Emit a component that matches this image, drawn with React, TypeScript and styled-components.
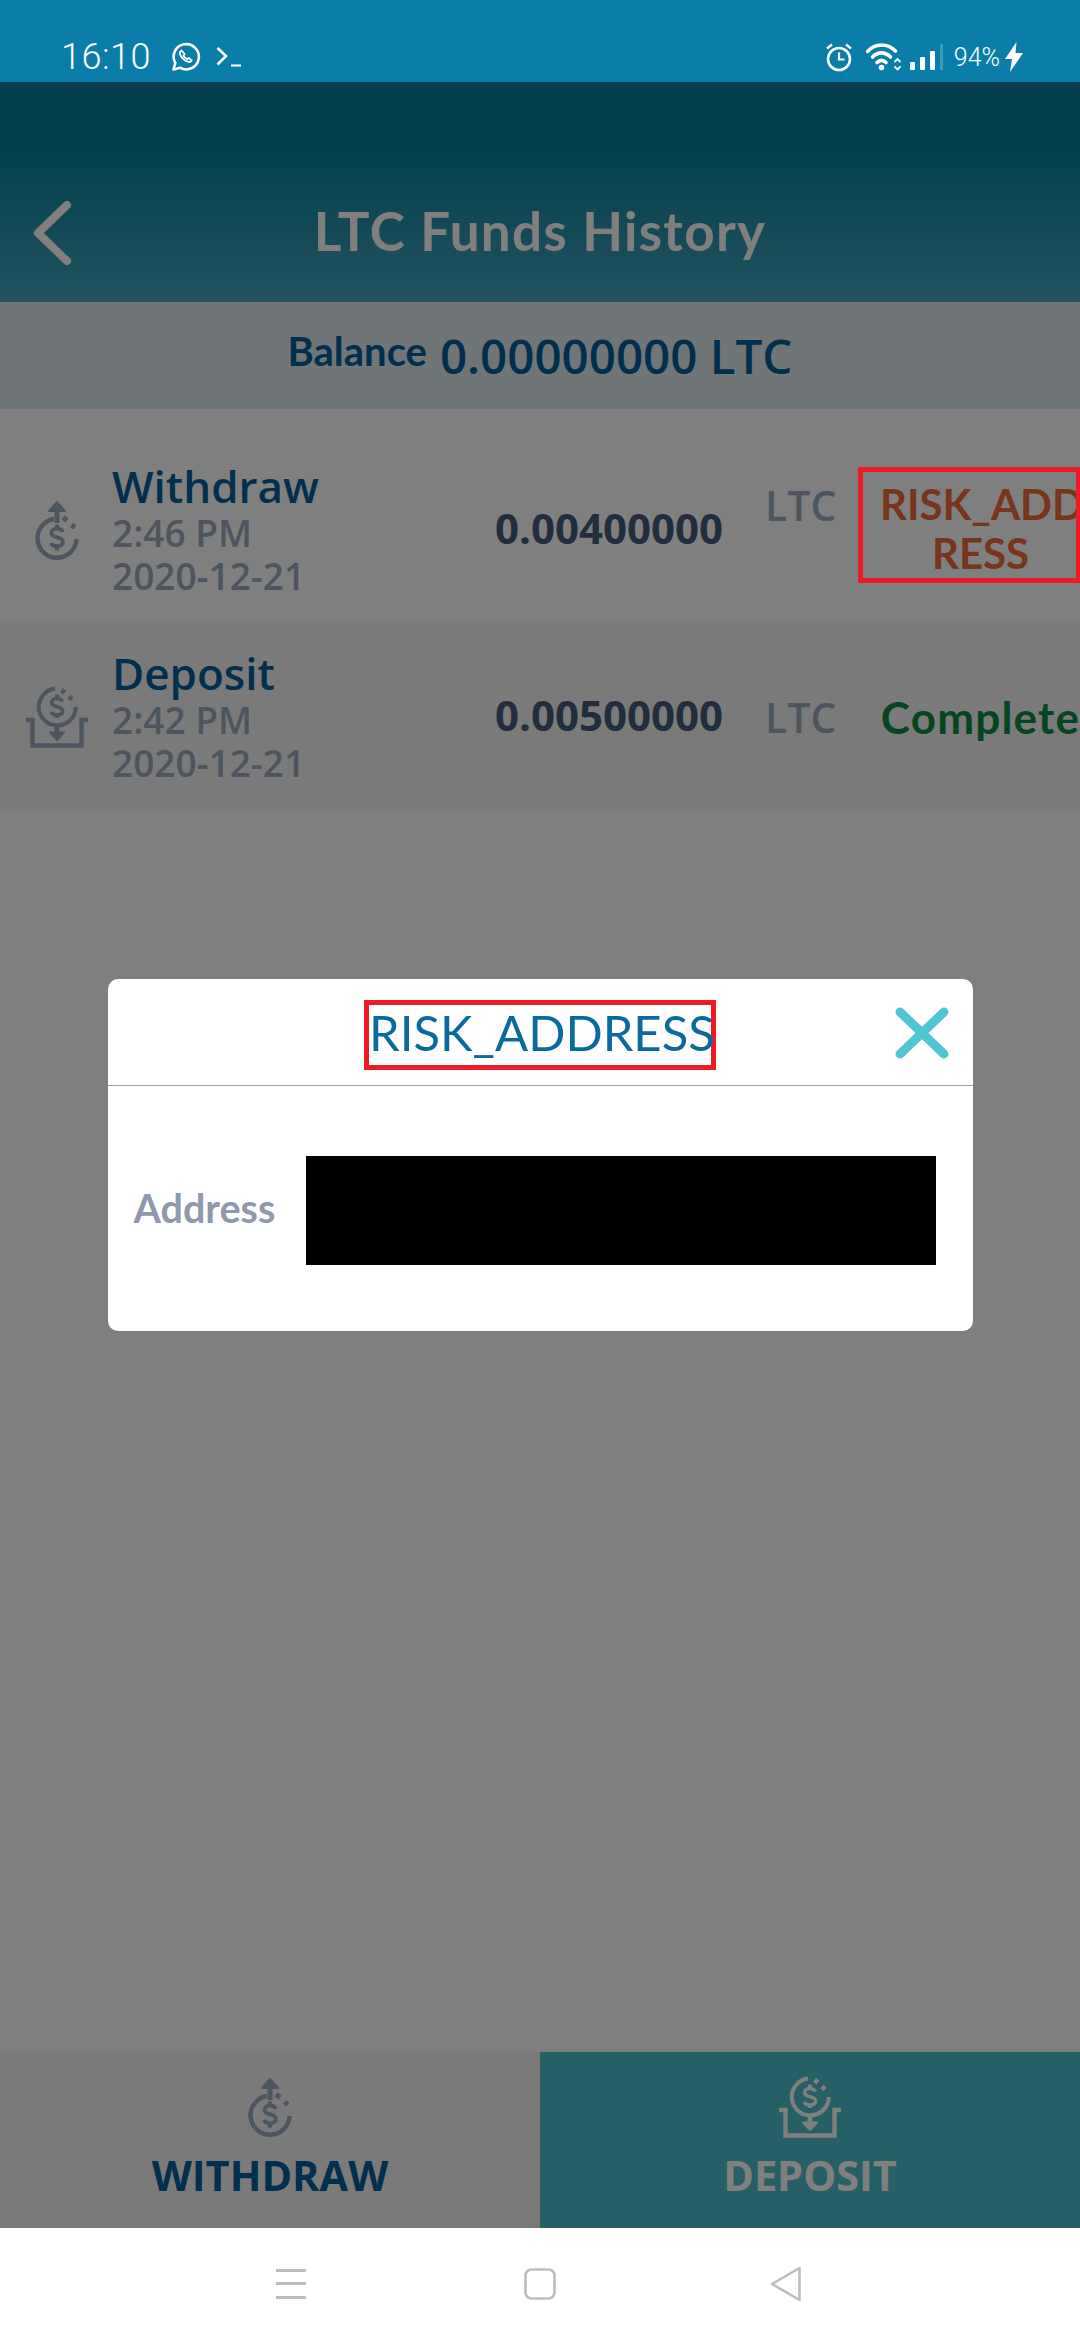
import React from "react";
import styled, { createGlobalStyle } from "styled-components";

const GlobalStyle = createGlobalStyle`
  html, body {
    margin: 0;
    padding: 0;
    background: #fff;
  }
  * {
    box-sizing: border-box;
  }
`;

const SANS = `"Open Sans", "Liberation Sans", sans-serif`;
const ROUND = `Lato, "Noto Sans", sans-serif`;

const WithdrawIcon = ({ color }: { color: string }) => (
  <svg width="60" height="62" viewBox="0 0 60 62" fill="none" stroke={color} strokeWidth="4.4">
    <path d="M30 24V8" strokeWidth="5" />
    <path d="M22 12 30 3l8 9z" fill={color} strokeWidth="2" strokeLinejoin="round" />
    <path d="M27 20A19.500 19.500 0 1 0 49.500 40" />
    <path d="M36 18.500l4 3M44.500 26l3.500 2.500" strokeWidth="5" />
    <path d="M36 33c-1-2.300-3.200-3.300-6-3.300-3.200 0-5.600 1.600-5.600 4.200 0 6 11.600 3 11.600 9 0 2.700-2.600 4.300-6 4.300-2.900 0-5.200-1-6.200-3.200" strokeWidth="3.800" />
    <path d="M30 25.500v3.500M30 47.500v4" strokeWidth="4.200" />
  </svg>
);

const DepositIcon = ({ color }: { color: string }) => (
  <svg width="62" height="62" viewBox="0 0 62 62" fill="none" stroke={color} strokeWidth="4">
    <path d="M29 2.500A18.500 18.500 0 1 0 49.800 21" />
    <path d="M35.500 4l3.500 2.700M43 10.500l3 3" strokeWidth="4.800" />
    <path d="M36.500 15.500c-1-2.100-3-3-5.500-3-3 0-5.300 1.500-5.300 4 0 5.600 11 2.800 11 8.500 0 2.500-2.500 4-5.700 4-2.700 0-4.900-1-5.800-3" strokeWidth="3.600" />
    <path d="M31 8.500v3M31 29v3" />
    <path d="M31 40v6" strokeWidth="4.800" />
    <path d="M24 46.500h14L31 54z" fill={color} strokeWidth="2" strokeLinejoin="round" />
    <path d="M1 34h5.500v25.500h49V34H61" strokeWidth="4.400" strokeLinecap="round" />
  </svg>
);

const WhatsappIcon = () => (
  <svg width="30" height="30" viewBox="0 0 30 30" fill="none" stroke="#fff" strokeWidth="2.600">
    <path d="M2.500 27.500l1.800-6.500a12.600 12.600 0 1 1 4.700 4.700z" strokeLinejoin="round" />
    <path d="M10.500 8.500c-1.500.8-2 2.400-1.400 4 1.300 3.300 3.900 5.900 7.400 7.200 1.700.6 3.300 0 4.200-1.500l-3-2.200-1.500 1.300c-1.700-.8-3-2.100-3.800-3.800l1.300-1.500z" strokeWidth="1.800" strokeLinejoin="round" />
  </svg>
);

const TerminalIcon = () => (
  <svg width="26" height="22" viewBox="0 0 26 22" fill="none" stroke="#fff" strokeWidth="2.600">
    <path d="M1.500 2 10 10 1.500 18.500" />
    <path d="M15 19.500h10" strokeWidth="2" />
  </svg>
);

const AlarmIcon = () => (
  <svg width="28" height="30" viewBox="0 0 28 30" fill="none" stroke="#fff" strokeWidth="2.600">
    <circle cx="14" cy="17" r="11" />
    <path d="M14 10.500v7h5.500" strokeWidth="2.200" />
    <path d="M2 6.500 7 2.500M26 6.500l-5-4" strokeWidth="2.400" />
  </svg>
);

const WifiIcon = () => (
  <svg width="36" height="30" viewBox="0 0 36 30" fill="none" stroke="#fff" strokeWidth="3.600" strokeLinecap="round">
    <path d="M1.500 9.500C9.500 1 21 1 29.500 9" />
    <path d="M6.500 15c5.500-5.500 12.500-5.500 18 0" />
    <path d="M11 20.500c3-3 6-3 9 0" />
    <circle cx="15.500" cy="25.500" r="2.800" fill="#fff" stroke="none" />
    <path d="M29 19.500l2.500-2.500 2.500 2.500M29 25l2.500 2.500L34 25" strokeWidth="1.800" />
  </svg>
);

const SignalIcon = () => (
  <svg width="34" height="28" viewBox="0 0 34 28" fill="#fff">
    <rect x="0" y="19" width="5" height="8" rx="1" />
    <rect x="10" y="14" width="5" height="13" rx="1" />
    <rect x="20" y="8" width="5" height="19" rx="1" />
    <rect x="30" y="1" width="3" height="26" fill="#3f9dc0" />
  </svg>
);

const BoltIcon = () => (
  <svg width="18" height="30" viewBox="0 0 18 30" fill="#fff">
    <path d="M11.500 0 0 17h7L5 30 18 11h-7.500z" />
  </svg>
);

const BackIcon = () => (
  <svg width="40" height="64" viewBox="0 0 40 64" fill="none" stroke="#fff" strokeWidth="8" strokeLinecap="round" strokeLinejoin="round">
    <path d="M34 4 5 32l29 28" />
  </svg>
);

const CloseIcon = () => (
  <svg width="54" height="52" viewBox="0 0 54 52" fill="none" stroke="#50c6d4" strokeWidth="9" strokeLinecap="round">
    <path d="M5 5l44 42M49 5 5 47" />
  </svg>
);

const MenuIcon = () => (
  <svg width="30" height="30" viewBox="0 0 30 30" fill="#bdbdbd">
    <rect y="0" width="30" height="3" />
    <rect y="13" width="30" height="3" />
    <rect y="27" width="30" height="3" />
  </svg>
);

const HomeIcon = () => (
  <svg width="32" height="32" viewBox="0 0 32 32" fill="none" stroke="#bdbdbd" strokeWidth="2.600">
    <rect x="1.500" y="1.500" width="29" height="29" rx="6" />
  </svg>
);

const BackNavIcon = () => (
  <svg width="32" height="36" viewBox="0 0 32 36" fill="none" stroke="#bdbdbd" strokeWidth="2.600" strokeLinejoin="round">
    <path d="M29.500 2 2 18l27.500 16z" />
  </svg>
);

const Page = styled.div`
  width: 1080px;
  height: 2340px;
  display: flex;
  flex-direction: column;
  overflow: hidden;
  font-family: ${SANS};
`;

const StatusBar = styled.div`
  height: 82px;
  flex: none;
  background: #0a7ea9;
  color: #fff;
  display: flex;
  align-items: center;
  padding: 32px 57px 0 61px;
  font-family: Roboto, sans-serif;
`;

const Time = styled.span`
  font-size: 36px;
  font-weight: 300;
  letter-spacing: 0.5px;
  margin-right: 5px;
`;

const StatusLeft = styled.div`
  display: flex;
  align-items: center;
  gap: 15px;
  flex: 1;
`;

const StatusRight = styled.div`
  display: flex;
  align-items: center;
  gap: 13px;
`;

const WifiSlot = styled.span`
  line-height: 0;
  margin-right: -5px;
`;

const Battery = styled.span`
  font-size: 25px;
  font-weight: 300;
  margin: 0 -8px 0 -3px;
`;

const Screen = styled.div`
  position: relative;
  flex: 1;
  display: flex;
  flex-direction: column;
  background: #fff;
`;

const Header = styled.div`
  position: relative;
  height: 220px;
  flex: none;
  background: linear-gradient(180deg, #08809e 0%, #08809e 30%, #46a6c0 100%);
  display: flex;
  align-items: flex-end;
  justify-content: center;
  padding-bottom: 40px;
`;

const BackButton = styled.div`
  position: absolute;
  left: 33px;
  top: 119px;
  line-height: 0;
`;

const Title = styled.div`
  color: #fff;
  font-family: ${ROUND};
  font-size: 53px;
  font-weight: 700;
  letter-spacing: 1.3px;
  line-height: 62px;
`;

const BalanceBar = styled.div`
  height: 107px;
  flex: none;
  background: #e0eaee;
  color: #045f9a;
  display: flex;
  align-items: center;
  justify-content: center;
  gap: 13px;
`;

const BalanceLabel = styled.span`
  font-family: ${ROUND};
  font-size: 40px;
  font-weight: 700;
  transform: translateY(-5px);
`;

const BalanceValue = styled.span`
  font-size: 47.500px;
  font-weight: 600;
`;

const List = styled.div`
  flex: 1;
  display: flex;
  flex-direction: column;
`;

const Row = styled.div<{ $shade?: boolean; $flagged?: boolean }>`
  display: flex;
  align-items: center;
  height: ${({ $flagged }) => ($flagged ? 214 : 188)}px;
  padding-top: ${({ $flagged }) => ($flagged ? 28 : 0)}px;
  background: ${({ $shade }) => ($shade ? "#f5f5f5" : "#fff")};
`;

const IconCell = styled.div`
  width: 112px;
  flex: none;
  display: flex;
  justify-content: center;
  line-height: 0;
  padding-left: 2px;
`;

const Info = styled.div`
  width: 220px;
  flex: none;
  margin-top: -3px;
`;

const Name = styled.div`
  color: #045f9a;
  font-size: 44px;
  font-weight: 600;
  line-height: 50px;
`;

const Stamp = styled.div`
  color: #9aaabf;
  font-size: 37px;
  font-weight: 600;
  line-height: 43px;
`;

const Amount = styled.div`
  width: 391px;
  flex: none;
  text-align: right;
  color: #445a7a;
  font-size: 42px;
  font-weight: 700;
  padding-bottom: 6px;
`;

const Side = styled.div<{ $flagged?: boolean }>`
  display: flex;
  flex: 1;
  min-width: 0;
  align-items: ${({ $flagged }) => ($flagged ? "flex-start" : "center")};
  padding-bottom: ${({ $flagged }) => ($flagged ? 10 : 0)}px;
`;

const Coin = styled.div<{ $flagged?: boolean }>`
  width: 135px;
  flex: none;
  padding-left: 42px;
  color: #9aaabf;
  font-size: 41px;
  font-weight: 600;
  line-height: 50px;
  margin-top: ${({ $flagged }) => ($flagged ? 13 : 0)}px;
`;

const StatusText = styled.div<{ $flagged?: boolean }>`
  position: relative;
  width: 223px;
  flex: none;
  height: ${({ $flagged }) => ($flagged ? "116px" : "auto")};
  padding: ${({ $flagged }) => ($flagged ? "13px 0 0 22px" : "0 0 0 22px")};
  color: ${({ $flagged }) => ($flagged ? "#ee6a36" : "#0a8a42")};
  font-family: ${ROUND};
  font-size: ${({ $flagged }) => ($flagged ? 42 : 44)}px;
  letter-spacing: ${({ $flagged }) => ($flagged ? 0 : 1.2)}px;
  font-weight: 700;
  line-height: 49px;
  text-align: center;
  white-space: nowrap;
`;

// the red marking sits on top of the dimmed layer, it is not dimmed itself
const RedFrame = styled.span`
  position: absolute;
  inset: 0;
  z-index: 3;
  border: 5px solid #ed1c24;
`;

const Tabs = styled.div`
  height: 176px;
  flex: none;
  display: flex;
`;

const Tab = styled.div<{ $active?: boolean }>`
  flex: 1;
  background: ${({ $active }) => ($active ? "#4cc1cc" : "#f5f5f5")};
  color: ${({ $active }) => ($active ? "#fff" : "#045f9a")};
  display: flex;
  flex-direction: column;
  align-items: center;
  padding-top: 24px;
`;

const TabLabel = styled.div`
  font-size: 41.500px;
  font-weight: 700;
  line-height: 50px;
  margin-top: 12px;
`;

const Overlay = styled.div`
  position: absolute;
  inset: 0;
  z-index: 2;
  background: rgba(0, 0, 0, 0.5);
  display: flex;
  align-items: center;
  justify-content: center;
`;

const Modal = styled.div`
  width: 865px;
  height: 352px;
  background: #fff;
  border-radius: 10px;
  display: flex;
  flex-direction: column;
`;

const ModalHead = styled.div`
  position: relative;
  height: 107px;
  flex: none;
  display: flex;
  align-items: flex-start;
  justify-content: center;
  padding-top: 21px;
  border-bottom: 1.500px solid #9aa0a6;
`;

const ModalTitle = styled.div`
  border: 5px solid #ed1c24;
  width: 352px;
  height: 70px;
  color: #0a6a9e;
  font-family: ${ROUND};
  font-size: 49px;
  font-weight: 400;
  line-height: 55px;
  text-align: center;
  white-space: nowrap;
`;

const CloseButton = styled.div`
  position: absolute;
  right: 24px;
  top: 28px;
  line-height: 0;
`;

const ModalBody = styled.div`
  flex: 1;
  display: flex;
  align-items: center;
  padding: 4px 37px 0 26px;
  justify-content: space-between;
`;

const FieldLabel = styled.div`
  color: #8f99ab;
  font-family: ${ROUND};
  font-size: 39.500px;
  font-weight: 700;
  margin-bottom: 6px;
`;

const Redacted = styled.div`
  width: 630px;
  height: 109px;
  background: #000;
`;

const NavBar = styled.div`
  height: 112px;
  flex: none;
  background: #fff;
  display: flex;
  align-items: center;
  gap: 218px;
  padding-left: 276px;
  line-height: 0;
`;

const NavBack = styled.span`
  margin-left: -4px;
`;

const App = () => {
  return (
    <>
      <GlobalStyle />
      <Page>
        <StatusBar>
          <StatusLeft>
            <Time>16:10</Time>
            <WhatsappIcon />
            <TerminalIcon />
          </StatusLeft>
          <StatusRight>
            <AlarmIcon />
            <WifiSlot>
              <WifiIcon />
            </WifiSlot>
            <SignalIcon />
            <Battery>94%</Battery>
            <BoltIcon />
          </StatusRight>
        </StatusBar>
        <Screen>
          <Header>
            <BackButton>
              <BackIcon />
            </BackButton>
            <Title>LTC Funds History</Title>
          </Header>
          <BalanceBar>
            <BalanceLabel>Balance</BalanceLabel>
            <BalanceValue>0.00000000 LTC</BalanceValue>
          </BalanceBar>
          <List>
            <Row $flagged>
              <IconCell>
                <WithdrawIcon color="#9aaabf" />
              </IconCell>
              <Info>
                <Name>Withdraw</Name>
                <Stamp>2:46 PM</Stamp>
                <Stamp>2020-12-21</Stamp>
              </Info>
              <Amount>0.00400000</Amount>
              <Side $flagged>
                <Coin $flagged>LTC</Coin>
                <StatusText $flagged>
                  RISK_ADD
                  <br />
                  RESS
                  <RedFrame />
                </StatusText>
              </Side>
            </Row>
            <Row $shade>
              <IconCell>
                <DepositIcon color="#9aaabf" />
              </IconCell>
              <Info>
                <Name>Deposit</Name>
                <Stamp>2:42 PM</Stamp>
                <Stamp>2020-12-21</Stamp>
              </Info>
              <Amount>0.00500000</Amount>
              <Side>
                <Coin>LTC</Coin>
                <StatusText>Complete</StatusText>
              </Side>
            </Row>
          </List>
          <Tabs>
            <Tab>
              <WithdrawIcon color="#9aaabf" />
              <TabLabel>WITHDRAW</TabLabel>
            </Tab>
            <Tab $active>
              <DepositIcon color="#fff" />
              <TabLabel>DEPOSIT</TabLabel>
            </Tab>
          </Tabs>
          <Overlay>
            <Modal>
              <ModalHead>
                <ModalTitle>RISK_ADDRESS</ModalTitle>
                <CloseButton>
                  <CloseIcon />
                </CloseButton>
              </ModalHead>
              <ModalBody>
                <FieldLabel>Address</FieldLabel>
                <Redacted />
              </ModalBody>
            </Modal>
          </Overlay>
        </Screen>
        <NavBar>
          <MenuIcon />
          <HomeIcon />
          <NavBack>
            <BackNavIcon />
          </NavBack>
        </NavBar>
      </Page>
    </>
  );
};

export default App;
